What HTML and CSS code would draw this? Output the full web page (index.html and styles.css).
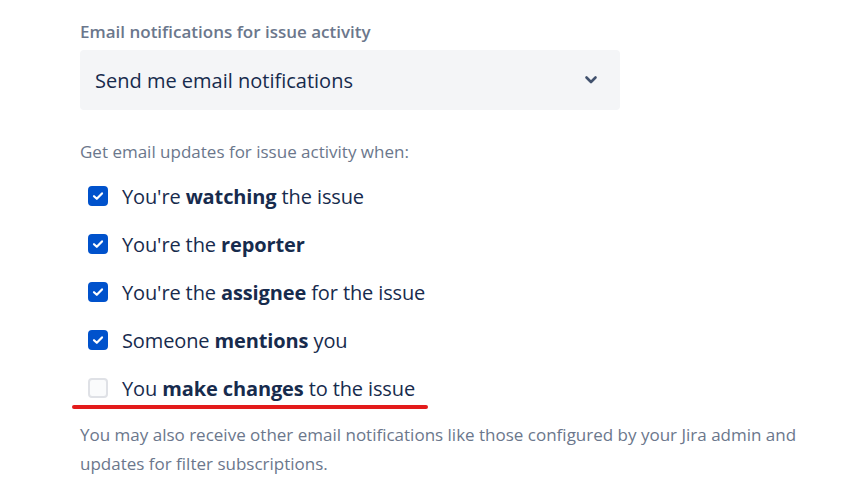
FILE: index.html
```html
<!DOCTYPE html>
<html lang="en">

<head>
  <meta charset="UTF-8">
  <meta name="viewport" content="width=device-width, initial-scale=1.0">
  <title>Email notifications</title>
  <link rel="stylesheet" href="styles.css">
</head>

<body>
  <div class="container">
    <label class="field-label" for="emailSetting">Email notifications for issue activity</label>
    <div class="select">
      <span class="select-value" id="emailSetting">Send me email notifications</span>
      <svg class="chevron" width="14" height="10" viewBox="0 0 14 10">
        <path d="M2.5 2.5 L7 7 L11.5 2.5" fill="none" stroke="#42526e" stroke-width="2.6" stroke-linecap="round" stroke-linejoin="round" />
      </svg>
    </div>

    <p class="hint">Get email updates for issue activity when:</p>

    <ul class="options">
      <li class="option checked"><span class="box"><svg width="12" height="10" viewBox="0 0 12 10"><path d="M2 5.2 L4.8 7.8 L10 2.4" fill="none" stroke="#fff" stroke-width="2.2" stroke-linecap="round" stroke-linejoin="round" /></svg></span><span>You're <b>watching</b> the issue</span></li>
      <li class="option checked"><span class="box"><svg width="12" height="10" viewBox="0 0 12 10"><path d="M2 5.2 L4.8 7.8 L10 2.4" fill="none" stroke="#fff" stroke-width="2.2" stroke-linecap="round" stroke-linejoin="round" /></svg></span><span>You're the <b>reporter</b></span></li>
      <li class="option checked"><span class="box"><svg width="12" height="10" viewBox="0 0 12 10"><path d="M2 5.2 L4.8 7.8 L10 2.4" fill="none" stroke="#fff" stroke-width="2.2" stroke-linecap="round" stroke-linejoin="round" /></svg></span><span>You're the <b>assignee</b> for the issue</span></li>
      <li class="option checked"><span class="box"><svg width="12" height="10" viewBox="0 0 12 10"><path d="M2 5.2 L4.8 7.8 L10 2.4" fill="none" stroke="#fff" stroke-width="2.2" stroke-linecap="round" stroke-linejoin="round" /></svg></span><span>Someone <b>mentions</b> you</span></li>
      <li class="option marked"><span class="box"></span><span>You <b>make changes</b> to the issue</span></li>
    </ul>

    <p class="note">You may also receive other email notifications like those configured by your Jira admin and updates for filter subscriptions.</p>
    <a class="more" href="#">Learn more about email notifications</a>
  </div>
</body>

</html>
```

FILE: styles.css
```css
body {
  margin: 0;
  background-color: #fff;
  font-family: "Open Sans", "Noto Sans", sans-serif;
  color: #172b4d;
}

.container {
  padding: 20px 0 0 80px;
  width: 740px;
}

.field-label {
  display: block;
  font-size: 17px;
  font-weight: 600;
  color: #6b778c;
  line-height: 24px;
  margin-bottom: 6px;
}

.select {
  width: 540px;
  height: 60px;
  box-sizing: border-box;
  display: flex;
  align-items: center;
  justify-content: space-between;
  padding: 0 22px 0 15px;
  background-color: #f4f5f7;
  border-radius: 4px;
}

.select-value {
  font-size: 20px;
}

.hint {
  margin: 29px 0 0;
  font-size: 17px;
  line-height: 26px;
  color: #6b778c;
}

.options {
  list-style: none;
  margin: 7px 0 0;
  padding: 0 0 0 8px;
}

.option {
  display: flex;
  align-items: center;
  height: 48px;
  font-size: 20px;
  letter-spacing: -0.12px;
}

.option b {
  font-weight: 700;
}

.box {
  width: 20px;
  height: 20px;
  box-sizing: border-box;
  border-radius: 4px;
  margin-right: 14px;
  display: flex;
  align-items: center;
  justify-content: center;
  background-color: #fafbfc;
  border: 2px solid #dfe1e6;
}

.checked .box {
  background-color: #0052cc;
  border-color: #0052cc;
}

.marked {
  position: relative;
}

/* red hand-drawn underline */
.marked::after {
  content: "";
  position: absolute;
  left: -16px;
  top: 41px;
  width: 356px;
  height: 4px;
  border-radius: 2px;
  background-color: #e31b1b;
}

.note {
  margin: 8px 0 0;
  font-size: 17px;
  line-height: 29px;
  color: #6b778c;
}

.more {
  display: block;
  margin-left: 105px;
  font-size: 17px;
  line-height: 29px;
  color: #0052cc;
  text-decoration: none;
}
```
